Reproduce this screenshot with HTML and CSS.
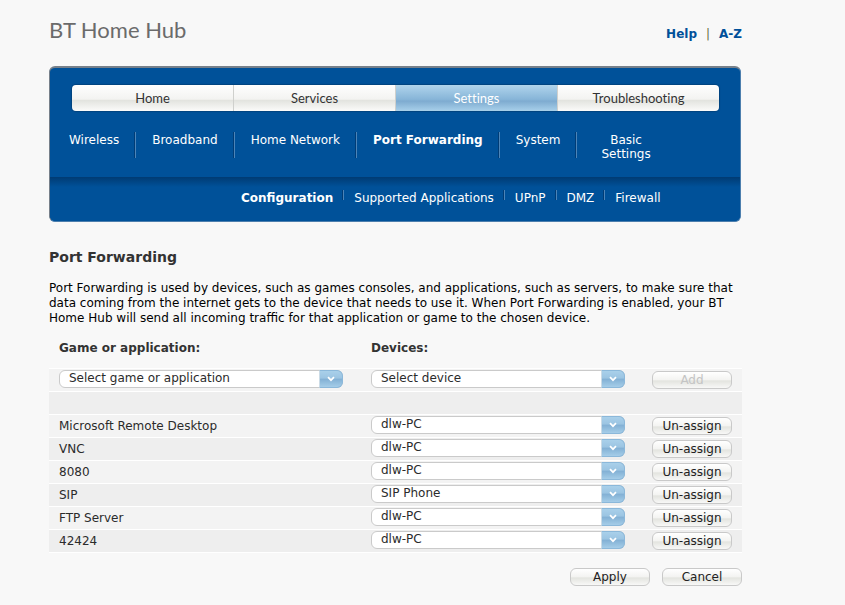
FILE: index.html
```html
<!DOCTYPE html>
<html lang="en">
<head>
<meta charset="utf-8">
<title>BT Home Hub</title>
<link rel="stylesheet" href="styles.css">
</head>
<body>
<svg class="defs" aria-hidden="true"><symbol id="chevron" viewBox="0 0 8 6"><path d="M1 1.2 4 4.2 7 1.2" fill="none" stroke="#fff" stroke-width="1.7"/></symbol></svg>
<div class="page">
  <header class="masthead">
    <div class="brand">BT Home Hub</div>
    <div class="links"><a href="#">Help</a><span>|</span><a href="#">A-Z</a></div>
  </header>

  <div class="panel">
    <div class="panel-top">
      <nav class="tabs" aria-label="Main">
        <a href="#">Home</a>
        <a href="#">Services</a>
        <a href="#" class="active">Settings</a>
        <a href="#">Troubleshooting</a>
      </nav>
      <nav class="subnav" aria-label="Settings">
        <a href="#">Wireless</a>
        <a href="#">Broadband</a>
        <a href="#">Home Network</a>
        <a href="#" class="active">Port Forwarding</a>
        <a href="#">System</a>
        <a href="#" class="two-line">Basic<br>Settings</a>
      </nav>
    </div>
    <nav class="sections" aria-label="Port Forwarding">
      <a href="#" class="active">Configuration</a>
      <a href="#">Supported Applications</a>
      <a href="#">UPnP</a>
      <a href="#">DMZ</a>
      <a href="#">Firewall</a>
    </nav>
  </div>

  <main>
    <h1>Port Forwarding</h1>
    <p class="intro">Port Forwarding is used by devices, such as games consoles, and applications, such as servers, to make sure that data coming from the internet gets to the device that needs to use it. When Port Forwarding is enabled, your BT Home Hub will send all incoming traffic for that application or game to the chosen device.</p>
    <form>
      <table>
        <colgroup><col class="c-app"><col class="c-dev"><col></colgroup>
        <thead>
          <tr><th scope="col">Game or application:</th><th scope="col">Devices:</th><td></td></tr>
        </thead>
        <tbody>
          <tr>
            <td><span class="pick"><select aria-label="Game or application"><option>Select game or application</option></select><i><svg><use href="#chevron"/></svg></i></span></td>
            <td><span class="pick"><select aria-label="Device"><option>Select device</option></select><i><svg><use href="#chevron"/></svg></i></span></td>
            <td><button type="button" disabled>Add</button></td>
          </tr>
          <tr><td></td><td></td><td></td></tr>
          <tr>
            <td>Microsoft Remote Desktop</td>
            <td><span class="pick"><select aria-label="Device for Microsoft Remote Desktop"><option>dlw-PC</option></select><i><svg><use href="#chevron"/></svg></i></span></td>
            <td><button type="button">Un-assign</button></td>
          </tr>
          <tr>
            <td>VNC</td>
            <td><span class="pick"><select aria-label="Device for VNC"><option>dlw-PC</option></select><i><svg><use href="#chevron"/></svg></i></span></td>
            <td><button type="button">Un-assign</button></td>
          </tr>
          <tr>
            <td>8080</td>
            <td><span class="pick"><select aria-label="Device for 8080"><option>dlw-PC</option></select><i><svg><use href="#chevron"/></svg></i></span></td>
            <td><button type="button">Un-assign</button></td>
          </tr>
          <tr>
            <td>SIP</td>
            <td><span class="pick"><select aria-label="Device for SIP"><option>SIP Phone</option></select><i><svg><use href="#chevron"/></svg></i></span></td>
            <td><button type="button">Un-assign</button></td>
          </tr>
          <tr>
            <td>FTP Server</td>
            <td><span class="pick"><select aria-label="Device for FTP Server"><option>dlw-PC</option></select><i><svg><use href="#chevron"/></svg></i></span></td>
            <td><button type="button">Un-assign</button></td>
          </tr>
          <tr>
            <td>42424</td>
            <td><span class="pick"><select aria-label="Device for 42424"><option>dlw-PC</option></select><i><svg><use href="#chevron"/></svg></i></span></td>
            <td><button type="button">Un-assign</button></td>
          </tr>
        </tbody>
      </table>
      <div class="actions">
        <button type="button">Apply</button>
        <button type="button">Cancel</button>
      </div>
    </form>
  </main>
</div>
</body>
</html>
```
FILE: styles.css
```css
* { box-sizing: border-box; }
body {
  margin: 0;
  background: #f8f8f8;
  color: #2b2b2b;
  font: 12px/15px "DejaVu Sans", Verdana, sans-serif;
}
a { color: inherit; text-decoration: none; }
.defs { display: none; }
.page { margin: 0 103px 0 49px; }

.masthead {
  display: flex;
  justify-content: space-between;
  align-items: center;
  height: 66px;
  padding-bottom: 6px;
}
.brand { color: #6b6b6b; font: 22px/30px Lato, sans-serif; }
.links { display: flex; gap: 9px; padding-top: 8px; color: #00509a; }
.links a { font-weight: bold; }
.links span { color: #6a7040; }

.panel {
  background: #005199;
  border: 1px solid #4d7fae;
  border-top: 2px solid #77808a;
  border-left-color: #77808a;
  border-radius: 6px;
  color: #fff;
  margin-right: 1px;
}
.panel-top { padding: 17px 21px 0 22px; }
.tabs {
  display: flex;
  height: 26px;
  border-radius: 4px;
  overflow: hidden;
  box-shadow: 0 0 1px 1px #00437f;
}
.tabs a {
  flex: 1;
  text-align: center;
  color: #333;
  font: 13px/26px Lato, sans-serif;
  font-variant-ligatures: none;
  background: linear-gradient(#fefefe, #f3f3f1 55%, #e2e3de 58%, #fbfbfa);
}
.tabs a + a { border-left: 1px solid #cfd0cd; }
.tabs .active {
  color: #fff;
  background: linear-gradient(#b0d4ec, #87b5d8 55%, #7eabd0 62%, #a8d0ea);
}
.subnav {
  display: flex;
  height: 66px;
  margin: 0 -20px;
  padding-top: 21px;
  line-height: 14px;
}
.subnav a { height: 26px; padding: 1px 16px 0; }
.subnav a:first-child, .sections a:first-child { padding-left: 17px; }
.subnav a + a, .sections a + a { border-left: 1px solid #4c84b8; box-shadow: -1px 0 #003c76; }
.subnav .two-line { padding: 1px 24px 0; text-align: center; }
.active { font-weight: bold; }
.tabs .active { font-weight: normal; }

.sections {
  display: flex;
  padding: 13px 0 21px 174px;
  line-height: 14px;
  height: 44px;
  background: linear-gradient(#003b73, #005199 10px);
  border-radius: 0 0 5px 5px;
}
.sections a { height: 10px; padding: 1px 10px 0; }

h1 { margin: 0; padding: 26px 0 15px; font-size: 14px; line-height: 18px; color: #333; }
.intro { margin: 0; color: #000; }

table { width: 100%; border-collapse: collapse; table-layout: fixed; }
.c-app { width: 312px; }
.c-dev { width: 284px; }
th, td { padding: 0 10px; text-align: left; vertical-align: middle; }
thead th { height: 42px; padding-top: 4px; color: #333; }
tbody tr { border-top: 1px solid #fff; background: #f3f3f3; }
tbody tr:nth-child(even) { background: #eee; }
tbody tr:last-child { border-bottom: 1px solid #fff; }
tbody td { height: 23px; padding-top: 1px; }
tbody td:nth-child(2) { padding: 0 20px 1px 10px; }
tbody td:first-child { padding-right: 18px; }
tbody td:last-child { padding-left: 0; text-align: right; }
tbody tr:first-child td:first-child { padding-top: 0; padding-bottom: 1px; }

.pick { position: relative; display: block; height: 18px; }
.pick select {
  display: block;
  width: 100%;
  height: 18px;
  appearance: none;
  border: 1px solid #cacaca;
  border-radius: 6px;
  background: #fff;
  color: #2b2b2b;
  font: inherit;
  line-height: 14px;
  padding: 0 30px 2px 9px;
}
.pick i {
  position: absolute;
  top: 0;
  right: 0;
  width: 24px;
  height: 18px;
  display: flex;
  align-items: center;
  justify-content: center;
  border: 1px solid #8bb8da;
  border-left-color: #cbdbe6;
  border-radius: 0 6px 6px 0;
  background: linear-gradient(#a9d0ea, #9bc4e2 45%, #82b0d4 50%, #a5cde8);
  pointer-events: none;
}
.pick svg { width: 8px; height: 6px; }

button {
  width: 80px;
  height: 18px;
  padding: 1px 0 0;
  border: 1px solid #c9c9c9;
  border-radius: 6px;
  background: linear-gradient(#fff, #f3f3f1 50%, #e3e4df 55%, #f8f8f7);
  color: #222;
  font: inherit;
  line-height: 15px;
  vertical-align: middle;
}
button:disabled { color: #c4c4c4; }
.actions { display: flex; justify-content: flex-end; gap: 12px; padding-top: 15px; }
```
